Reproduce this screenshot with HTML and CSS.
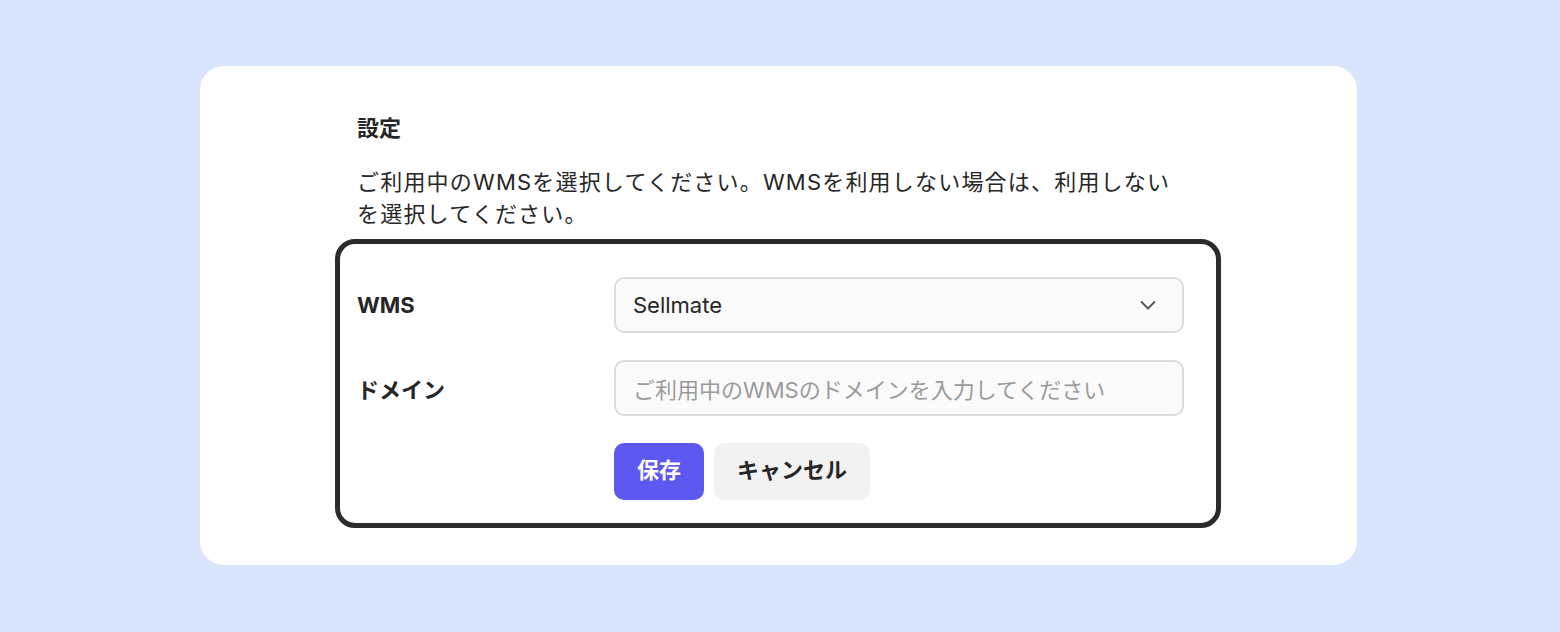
FILE: index.html
```html
<!DOCTYPE html>
<html lang="ja">
<head>
<meta charset="utf-8">
<link rel="stylesheet" href="styles.css">
</head>
<body>
<div class="card">
  <h2 class="title">設定</h2>
  <p class="desc">ご利用中のWMSを選択してください。WMSを利用しない場合は、利用しないを選択してください。</p>
  <div class="form-box">
    <div class="row">
      <div class="label">WMS</div>
      <div class="select">
        <span>Sellmate</span>
        <svg class="chev" width="20" height="20" viewBox="0 0 20 20"><path d="M3.5 7 L10 13.5 L16.5 7" fill="none" stroke="#555" stroke-width="1.8" stroke-linecap="round" stroke-linejoin="round"/></svg>
      </div>
    </div>
    <div class="row">
      <div class="label">ドメイン</div>
      <div class="input"><span class="ph">ご利用中のWMSのドメインを入力してください</span></div>
    </div>
    <div class="row">
      <div class="label"></div>
      <div class="buttons">
        <button class="btn primary">保存</button>
        <button class="btn secondary">キャンセル</button>
      </div>
    </div>
  </div>
</div>
</body>
</html>
```
FILE: styles.css
```css
* { box-sizing: border-box; }
html, body { margin: 0; padding: 0; }
body {
  background: #d8e5fd;
  font-family: Inter, "Noto Sans CJK JP", sans-serif;
  color: #262626;
  height: 632px;
  padding-top: 66px;
}
.card {
  margin-left: 200px;
  width: 1157px;
  height: 499px;
  background: #fff;
  border-radius: 24px;
  padding: 48px 0 0 135px;
}
.title {
  margin: 0 0 24px 22px;
  font-size: 22px;
  line-height: 28px;
  font-weight: 700;
}
.desc {
  margin: 0 0 9px 22px;
  width: 822px;
  font-size: 22px;
  line-height: 32px;
  letter-spacing: 1.2px;
}
.form-box {
  width: 886px;
  height: 289px;
  border: 5px solid #2b2b2b;
  border-radius: 20px;
  padding: 33px 32px 0 17px;
  display: flex;
  flex-direction: column;
  gap: 27px;
}
.row {
  display: flex;
  align-items: center;
}
.label {
  width: 257px;
  font-size: 22px;
  font-weight: 700;
}
.select, .input {
  width: 570px;
  height: 56px;
  background: #fafafa;
  border: 2px solid #dcdcdc;
  border-radius: 10px;
  display: flex;
  align-items: center;
  justify-content: space-between;
  padding: 0 24px 0 17px;
  font-size: 22px;
}
.ph { color: #9a9a9a; }
.chev { display: block; }
.buttons {
  display: flex;
  gap: 10px;
}
.btn {
  height: 57px;
  border: none;
  border-radius: 10px;
  font-family: inherit;
  font-size: 22px;
  font-weight: 700;
  line-height: 1;
  padding: 0 0 4px;
}
.primary { background: #5c58f0; color: #fff; width: 90px; }
.secondary { background: #f2f2f2; color: #262626; width: 156px; }
```
